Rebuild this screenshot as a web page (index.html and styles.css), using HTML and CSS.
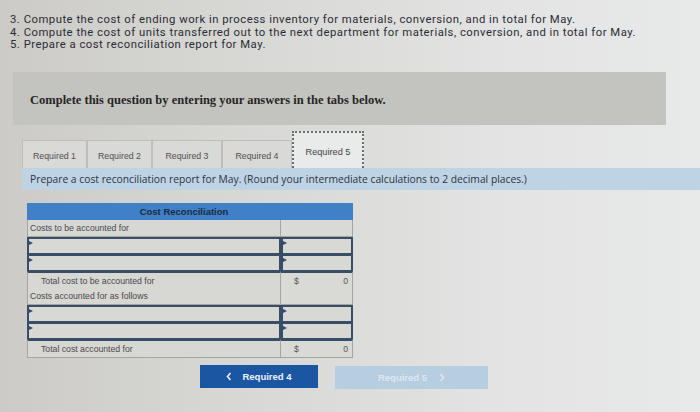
FILE: index.html
```html
<!DOCTYPE html>
<html>
<head>
<meta charset="utf-8">
<link rel="stylesheet" href="styles.css">
</head>
<body>
<div class="page">
  <div class="intro">
    <p>3. Compute the cost of ending work in process inventory for materials, conversion, and in total for May.</p>
    <p>4. Compute the cost of units transferred out to the next department for materials, conversion, and in total for May.</p>
    <p>5. Prepare a cost reconciliation report for May.</p>
  </div>
  <div class="banner">Complete this question by entering your answers in the tabs below.</div>
  <div class="tabs">
    <div class="tab t1">Required 1</div>
    <div class="tab t2">Required 2</div>
    <div class="tab t3">Required 3</div>
    <div class="tab t4">Required 4</div>
    <div class="tab active">Required 5</div>
  </div>
  <div class="instruction">Prepare a cost reconciliation report for May. (Round your intermediate calculations to 2 decimal places.)</div>
  <div class="recon">
    <div class="head">Cost Reconciliation</div>
    <div class="row label"><div class="c1">Costs to be accounted for</div><div class="c2"></div></div>
    <div class="row input"><div class="c1"><span class="mark"></span></div><div class="c2"><span class="mark"></span></div></div>
    <div class="row input"><div class="c1"><span class="mark"></span></div><div class="c2"><span class="mark"></span></div></div>
    <div class="row label"><div class="c1 indent">Total cost to be accounted for</div><div class="c2 amt"><span>$</span><span>0</span></div></div>
    <div class="row label"><div class="c1">Costs accounted for as follows</div><div class="c2"></div></div>
    <div class="row input"><div class="c1"><span class="mark"></span></div><div class="c2"><span class="mark"></span></div></div>
    <div class="row input"><div class="c1"><span class="mark"></span></div><div class="c2"><span class="mark"></span></div></div>
    <div class="row label"><div class="c1 indent">Total cost accounted for</div><div class="c2 amt"><span>$</span><span>0</span></div></div>
  </div>
  <div class="nav">
    <button class="btn prev"><svg class="chev" width="6" height="9" viewBox="0 0 6 9"><path d="M4.5 1 L1.5 4.5 L4.5 8" fill="none" stroke="#eef3fa" stroke-width="1.6"/></svg>Required 4</button>
    <button class="btn next">Required 5<svg class="chev right" width="6" height="9" viewBox="0 0 6 9"><path d="M1.5 1 L4.5 4.5 L1.5 8" fill="none" stroke="#dde7f0" stroke-width="1.6"/></svg></button>
  </div>
</div>
</body>
</html>
```
FILE: styles.css
```css
html, body {
  margin: 0;
  padding: 0;
}
body {
  width: 700px;
  height: 412px;
  overflow: hidden;
  background: linear-gradient(90deg, #cccbc7 0%, #d6d6d3 30%, #e2e3e2 70%, #e8e9e9 100%);
  font-family: "Liberation Sans", Arial, sans-serif;
}
.page {
  padding-top: 14px;
}
.intro {
  padding-left: 10px;
  font-family: Roboto, "Liberation Sans", sans-serif;
  font-size: 11.3px;
  letter-spacing: 0.5px;
  color: #2a2c34;
  line-height: 12.5px;
}
.intro p {
  margin: 0;
}
.banner {
  margin: 20px 34px 0 13px;
  height: 53px;
  background: #c3c3c0;
  display: flex;
  align-items: center;
  padding-left: 17px;
  font-family: "Liberation Serif", serif;
  font-weight: bold;
  font-size: 12.5px;
  color: #262626;
  padding-top: 4px;
  box-sizing: border-box;
}
.tabs {
  display: flex;
  align-items: flex-end;
  margin: 6px 0 0 22px;
  height: 37px;
}
.tab {
  height: 28px;
  box-sizing: border-box;
  border: 1px solid #bdbdbb;
  border-bottom: none;
  background: #d9d9d7;
  font-size: 8.8px;
  color: #505050;
  display: flex;
  align-items: center;
  justify-content: center;
  padding-top: 4px;
}
.t1 { width: 65px; }
.t2 { width: 65px; }
.t3 { width: 70px; }
.t4 { width: 70px; }
.tab.active {
  width: 72px;
  height: 37px;
  background: #e9eaea;
  border: 2px dotted #6e6e6e;
  border-bottom: none;
  padding-top: 4px;
  font-size: 9.2px;
  color: #444;
}
.instruction {
  margin-left: 22px;
  height: 22px;
  background: #bed3e3;
  display: flex;
  align-items: center;
  padding-left: 8px;
  font-family: "Open Sans", sans-serif;
  font-size: 10.3px;
  color: #2c3444;
}
.recon {
  margin: 13px 0 0 27px;
  width: 326px;
  background: #d6d6d3;
}
.head {
  height: 17px;
  background: #3f80c6;
  color: #1d2a40;
  font-weight: bold;
  font-size: 9.5px;
  text-align: center;
  line-height: 17px;
  padding-right: 12px;
}
.row {
  display: grid;
  grid-template-columns: 254px 72px;
  height: 17px;
}
.row .c1, .row .c2 {
  box-sizing: border-box;
  position: relative;
}
.row.label .c1 {
  border: 1px solid #a5a5a2;
  border-top: none;
  font-size: 8.7px;
  color: #4a4a4a;
  padding-left: 2px;
  line-height: 16px;
  background: #d7d7d4;
}
.row.label .c2 {
  border: 1px solid #a5a5a2;
  border-top: none;
  border-left: none;
  background: #d9d9d6;
}
.row.label .c1.indent {
  padding-left: 13px;
}
.c2.amt {
  display: flex;
  justify-content: space-between;
  padding: 0 4px 0 13px;
  font-size: 8.7px;
  color: #555;
  line-height: 16px;
}
.row.input .c1, .row.input .c2 {
  border: 2px solid #3a4d66;
  border-bottom-width: 1px;
  background: #d8d8d5;
}
.row.input + .row.label .c1,
.row.input + .row.label .c2 {
  border-top: 2px solid #3a4d66;
}
.mark {
  position: absolute;
  left: 0;
  top: 2px;
  width: 0;
  height: 0;
  border-top: 2px solid transparent;
  border-bottom: 2px solid transparent;
  border-left: 4px solid #2f4a70;
}
.nav {
  display: flex;
  margin: 9px 0 0 200px;
  gap: 17px;
}
.btn {
  height: 23px;
  border: none;
  font-family: "Liberation Sans", Arial, sans-serif;
  font-weight: bold;
  font-size: 9.5px;
  padding: 0;
  display: flex;
  align-items: center;
  justify-content: center;
}
.prev {
  width: 118px;
  background: #1b56a3;
  color: #eef3fa;
}
.next {
  width: 153px;
  margin-top: 1px;
  background: #b7cde0;
  color: #dde7f0;
}
.chev {
  margin-right: 10px;
}
.chev.right {
  margin: 0 0 0 12px;
}
```
